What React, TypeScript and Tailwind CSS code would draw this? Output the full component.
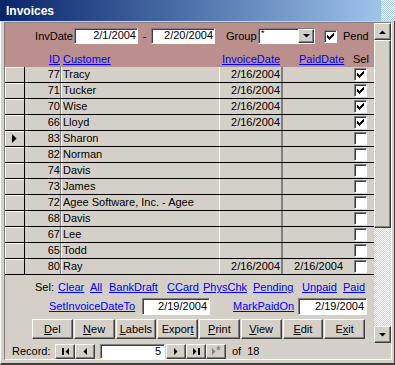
import React from "react"

const raised =
  "border border-t-white border-l-white border-r-[#404040] border-b-[#404040] shadow-[inset_-1px_-1px_#808080]"
const sunken =
  "border border-t-[#808080] border-l-[#808080] border-r-white border-b-white shadow-[inset_1px_1px_#404040]"

const rows = [
  { id: 77, name: "Tracy", inv: "2/16/2004", paid: "", sel: true },
  { id: 71, name: "Tucker", inv: "2/16/2004", paid: "", sel: true },
  { id: 70, name: "Wise", inv: "2/16/2004", paid: "", sel: true },
  { id: 66, name: "Lloyd", inv: "2/16/2004", paid: "", sel: true },
  { id: 83, name: "Sharon", inv: "", paid: "", sel: false, current: true },
  { id: 82, name: "Norman", inv: "", paid: "", sel: false },
  { id: 74, name: "Davis", inv: "", paid: "", sel: false },
  { id: 73, name: "James", inv: "", paid: "", sel: false },
  { id: 72, name: "Agee Software, Inc. - Agee", inv: "", paid: "", sel: false },
  { id: 68, name: "Davis", inv: "", paid: "", sel: false },
  { id: 67, name: "Lee", inv: "", paid: "", sel: false },
  { id: 65, name: "Todd", inv: "", paid: "", sel: false },
  { id: 80, name: "Ray", inv: "2/16/2004", paid: "2/16/2004", sel: false },
]

function Check({ checked }: { checked?: boolean }) {
  return (
    <div className={`w-[13px] h-[13px] bg-white flex items-center justify-center ${sunken}`}>
      {checked && (
        <svg width="7" height="7" viewBox="0 0 7 7" shapeRendering="crispEdges">
          <path d="M0 2h1v1h1v1h1v-1h1v-1h1v-1h1v-1h1v3h-1v1h-1v1h-1v1h-1v1h-1v-1h-1v-1h-1z" fill="#000" />
        </svg>
      )}
    </div>
  )
}

function Link({ children }: { children: React.ReactNode }) {
  return <span className="text-[#0000ff] underline underline-offset-[1px]">{children}</span>
}

function Tri({ dir, color = "#000" }: { dir: "up" | "down" | "left" | "right"; color?: string }) {
  const pts = {
    up: "0,4 7,4 3.5,0.5",
    down: "0,0 7,0 3.5,3.5",
    left: "4,0 4,7 0.5,3.5",
    right: "0,0 0,7 3.5,3.5",
  }[dir]
  const w = dir === "up" || dir === "down" ? 7 : 4
  const h = dir === "up" || dir === "down" ? 4 : 7
  return (
    <svg width={w} height={h} viewBox={`0 0 ${w} ${h}`}>
      <polygon points={pts} fill={color} />
    </svg>
  )
}

function Header() {
  return (
    <div className="h-[44px] bg-[#bc8f8f] flex flex-col">
      <div className="flex items-center mt-[5px] h-[16px]">
        <span className="ml-[27px] w-[41px] text-right">InvDate</span>
        <div className={`ml-[1px] w-[64px] h-[16px] bg-white text-right pr-[1px] pt-[1px] leading-[11px] ${sunken}`}>2/1/2004</div>
        <span className="w-[13px] text-center">-</span>
        <div className={`w-[64px] h-[16px] bg-white text-right pr-[1px] pt-[1px] leading-[11px] ${sunken}`}>2/20/2004</div>
        <span className="ml-[11px] w-[32px]">Group</span>
        <div className={`w-[57px] h-[16px] bg-white flex ${sunken}`}>
          <span className="flex-1 pl-[2px] text-[9px] leading-[9px]">*</span>
          <div className={`w-[16px] h-[14px] bg-[#d4d0c8] flex items-center justify-center ${raised}`}>
            <Tri dir="down" />
          </div>
        </div>
        <div className="ml-[9px]">
          <Check checked />
        </div>
        <span className="ml-[6px]">Pend</span>
      </div>
      <div className="flex mt-[9px] h-[13px] leading-[13px]">
        <span className="w-[55px] text-right">
          <Link>ID</Link>
        </span>
        <span className="ml-[3px] w-[159px]">
          <Link>Customer</Link>
        </span>
        <span className="w-[77px]">
          <Link>InvoiceDate</Link>
        </span>
        <span className="w-[54px]">
          <Link>PaidDate</Link>
        </span>
        <span>Sel</span>
      </div>
    </div>
  )
}

function Detail() {
  return (
    <div className="h-[208px] flex flex-col">
      {rows.map((r) => (
        <div key={r.id} className="flex h-[16px] border-b border-black leading-[15px]">
          <div className="w-[20px] border-r border-black shadow-[inset_1px_1px_#fff] flex items-center justify-center">
            {r.current && (
              <svg width="5" height="9" viewBox="0 0 5 9">
                <polygon points="0,0 0,9 4.5,4.5" fill="#000" />
              </svg>
            )}
          </div>
          <div className="w-[35px] text-right">{r.id}</div>
          <div className="w-[1px] bg-[#808080]" />
          <div className="w-[1px] bg-white" />
          <div className="w-[157px] pl-[1px] whitespace-nowrap">{r.name}</div>
          <div className="w-[62px] border-l border-white text-right pr-[1px]">{r.inv}</div>
          <div className="w-[2px] bg-[#808080]" />
          <div className="w-[61px] text-right pr-[1px]">{r.paid}</div>
          <div className="w-[30px] pl-[10px] pt-[1px]">
            <Check checked={r.sel} />
          </div>
        </div>
      ))}
    </div>
  )
}

function Footer() {
  const btns = [
    ["", "D", "el"],
    ["", "N", "ew"],
    ["", "L", "abels"],
    ["Expor", "t", ""],
    ["", "P", "rint"],
    ["", "V", "iew"],
    ["", "E", "dit"],
    ["E", "x", "it"],
  ]
  return (
    <div className="h-[68px] flex flex-col">
      <div className="flex mt-[6px] h-[13px] leading-[13px]">
        <span className="ml-[30px] w-[23px]">Sel:</span>
        <span className="w-[32px]"><Link>Clear</Link></span>
        <span className="w-[19px]"><Link>All</Link></span>
        <span className="w-[58px]"><Link>BankDraft</Link></span>
        <span className="w-[36px]"><Link>CCard</Link></span>
        <span className="w-[50px]"><Link>PhysChk</Link></span>
        <span className="w-[49px]"><Link>Pending</Link></span>
        <span className="w-[41px]"><Link>Unpaid</Link></span>
        <span><Link>Paid</Link></span>
      </div>
      <div className="flex items-center mt-[4px] h-[17px]">
        <span className="ml-[44px] w-[93px]"><Link>SetInvoiceDateTo</Link></span>
        <div className={`w-[68px] h-[17px] bg-white text-right pr-[2px] pt-[2px] leading-[11px] ${sunken}`}>2/19/2004</div>
        <span className="ml-[23px] w-[65px]"><Link>MarkPaidOn</Link></span>
        <div className={`w-[69px] h-[17px] bg-white text-right pr-[2px] pt-[2px] leading-[11px] ${sunken}`}>2/19/2004</div>
      </div>
      <div className="grid grid-cols-8 gap-[1px] ml-[27px] w-[333px] mt-[4px] h-[20px]">
        {btns.map(([a, u, b]) => (
          <div key={a + u + b} className={`bg-[#d4d0c8] flex items-center justify-center ${raised}`}>
            {a}
            <span className="underline underline-offset-[1px]">{u}</span>
            {b}
          </div>
        ))}
      </div>
    </div>
  )
}

function Scrollbar() {
  return (
    <div className="w-[17px] flex flex-col">
      <div className={`h-[17px] bg-[#d4d0c8] flex items-center justify-center ${raised}`}>
        <Tri dir="up" />
      </div>
      <div className={`h-[188px] bg-[#d4d0c8] ${raised}`} />
      <div className="flex-1 bg-[repeating-conic-gradient(#d4d0c8_0_25%,#ffffff_0_50%)] bg-[length:2px_2px]" />
      <div className={`h-[17px] bg-[#d4d0c8] flex items-center justify-center ${raised}`}>
        <Tri dir="down" />
      </div>
    </div>
  )
}

function NavBtn({ children }: { children: React.ReactNode }) {
  return (
    <div className={`w-[20px] h-[15px] bg-[#d4d0c8] flex items-center justify-center gap-[1px] ${raised}`}>
      {children}
    </div>
  )
}

function NavBar() {
  return (
    <div className="h-[16px] flex items-center">
      <span className="ml-[7px] w-[43px]">Record:</span>
      <NavBtn>
        <div className="w-[2px] h-[7px] bg-black" />
        <Tri dir="left" />
      </NavBtn>
      <NavBtn>
        <Tri dir="left" />
      </NavBtn>
      <div className={`ml-[5px] w-[65px] h-[15px] bg-white text-right pr-[3px] leading-[12px] ${sunken}`}>5</div>
      <div className="ml-[1px]" />
      <NavBtn>
        <Tri dir="right" />
      </NavBtn>
      <NavBtn>
        <Tri dir="right" />
        <div className="w-[2px] h-[7px] bg-black" />
      </NavBtn>
      <NavBtn>
        <Tri dir="right" color="#808080" />
        <span className="text-[#808080] text-[10px] leading-[8px] font-bold">*</span>
      </NavBtn>
      <span className="ml-[6px]">of</span>
      <span className="ml-[6px]">18</span>
    </div>
  )
}

export default function App() {
  return (
    <div className="w-[395px] h-[365px] flex flex-col bg-[#d4d0c8] font-['Liberation_Sans',Arial,sans-serif] text-[11px] text-black overflow-hidden">
      <div className="h-[21px] flex items-center bg-linear-to-r from-[#0a246a] to-[#a6caf0]">
        <span className="pl-[6px] flex-1 text-white font-bold text-[12px]">Invoices</span>
        <div className="w-[14px] h-[21px] bg-[repeating-conic-gradient(#a6caf0_0_25%,#ffffff_0_50%)] bg-[length:2px_2px]" />
      </div>
      <div className="flex-1 flex border-l border-l-white border-r border-r-[#404040] border-b-2 border-b-[#404040] pl-[3px] pr-[2px] pt-[1px] pb-[3px]">
        <div className="flex-1 flex flex-col border border-t-[#808080] border-l-[#808080] border-r-white border-b-white">
          <div className="flex h-[320px]">
            <div className="w-[369px] flex flex-col">
              <Header />
              <Detail />
              <Footer />
            </div>
            <Scrollbar />
          </div>
          <NavBar />
        </div>
      </div>
    </div>
  )
}
